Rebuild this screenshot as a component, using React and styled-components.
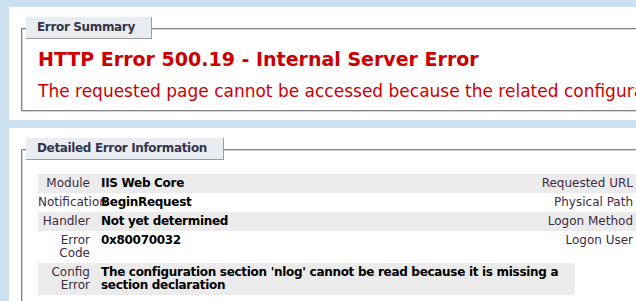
import React from "react";
import styled, {createGlobalStyle} from "styled-components";

const GlobalStyle = createGlobalStyle`
html, body {
    margin: 0;
    padding: 0;
    overflow: hidden;
    background: #cce1ef;
}
body {
    font-family: Verdana, "DejaVu Sans", sans-serif;
    font-size: 12px;
}
`;

const details = [
    {label: "Module", value: "IIS Web Core", side: "Requested URL", sideValue: "http://localhost:80/"},
    {label: "Notification", value: "BeginRequest", side: "Physical Path", sideValue: "C:\\inetpub\\wwwroot"},
    {label: "Handler", value: "Not yet determined", side: "Logon Method", sideValue: "Not yet determined"},
    {label: "Error Code", value: "0x80070032", side: "Logon User", sideValue: "Not yet determined"},
    {label: "Config Error", value: "The configuration section 'nlog' cannot be read because it is missing a section declaration"},
];

const App = () => {
  return(
    <Page>
        <GlobalStyle/>
        <Container>
            <Fieldset>
                <Legend>Error Summary</Legend>
                <Title>HTTP Error 500.19 - Internal Server Error</Title>
                <Subtitle>The requested page cannot be accessed because the related configuration data for the page is invalid.</Subtitle>
            </Fieldset>
        </Container>
        <Container $bottom={10}>
            <Fieldset $bottom={10}>
                <Legend>Detailed Error Information</Legend>
                <Grid>
                    {details.map((row, i) => {
                        const alt = i % 2 === 0;
                        return (
                            <React.Fragment key={row.label}>
                                <Label $alt={alt}>{row.label}</Label>
                                <Value $alt={alt} $wide={!row.side}>{row.value}</Value>
                                {row.side && <SideLabel $alt={alt}>{row.side}</SideLabel>}
                                {row.side && <SideValue $alt={alt}>{row.sideValue}</SideValue>}
                            </React.Fragment>
                        );
                    })}
                </Grid>
            </Fieldset>
        </Container>
    </Page>
  )
};

export default App;

const Page = styled.div`
width: 1100px;
padding: 7px 0 0 9px;
display: flex;
flex-direction: column;
gap: 8px;
`;

const Container = styled.div`
background: #ffffff;
padding: 10px 12px ${({$bottom}) => $bottom ?? 9}px 12px;
`;

const Fieldset = styled.div`
margin-top: 11px;
border: 1px solid #858585;
box-shadow: inset 1px 1px 0 #d4d4d4, 1px 1px 0 #d4d4d4;
padding: 0 16px ${({$bottom}) => $bottom ?? 9}px 16px;
display: flex;
flex-direction: column;
align-items: flex-start;
`;

const Legend = styled.div`
margin: -12px 0 0 -12px;
height: 21px;
line-height: 21px;
padding: 0 16px 0 11px;
background: #e8edf1;
border-right: 1px solid #9a9a9a;
border-bottom: 1px solid #9a9a9a;
color: #35354a;
font-weight: bold;
font-size: 12px;
letter-spacing: -0.35px;
`;

const Title = styled.h2`
margin: 9px 0 0 0;
font-size: 19px;
line-height: 23px;
font-weight: bold;
color: #cc0000;
white-space: nowrap;
`;

const Subtitle = styled.h3`
margin: 10px 0 0 0;
font-size: 17px;
line-height: 20px;
font-weight: normal;
color: #cc0000;
white-space: nowrap;
`;

const Grid = styled.div`
margin-top: 14px;
display: grid;
grid-template-columns: 63px 417px 57px 69px 300px;
font-size: 12px;
line-height: 13px;
`;

const Cell = styled.div`
padding: 3px 0;
background: ${({$alt}) => ($alt ? "#ebebeb" : "transparent")};
`;

const Label = styled(Cell)`
grid-column: 1;
padding-right: 11px;
text-align: right;
color: #3d2b44;
`;

const Value = styled(Cell)`
grid-column: ${({$wide}) => ($wide ? "2 / span 2" : "2")};
font-weight: bold;
letter-spacing: -0.3px;
color: #000000;
`;

const SideLabel = styled(Cell)`
grid-column: 3 / span 2;
padding-right: 11px;
text-align: right;
white-space: nowrap;
color: #3d2b44;
`;

const SideValue = styled(Cell)`
grid-column: 5;
padding-left: 8px;
font-weight: bold;
white-space: nowrap;
`;
